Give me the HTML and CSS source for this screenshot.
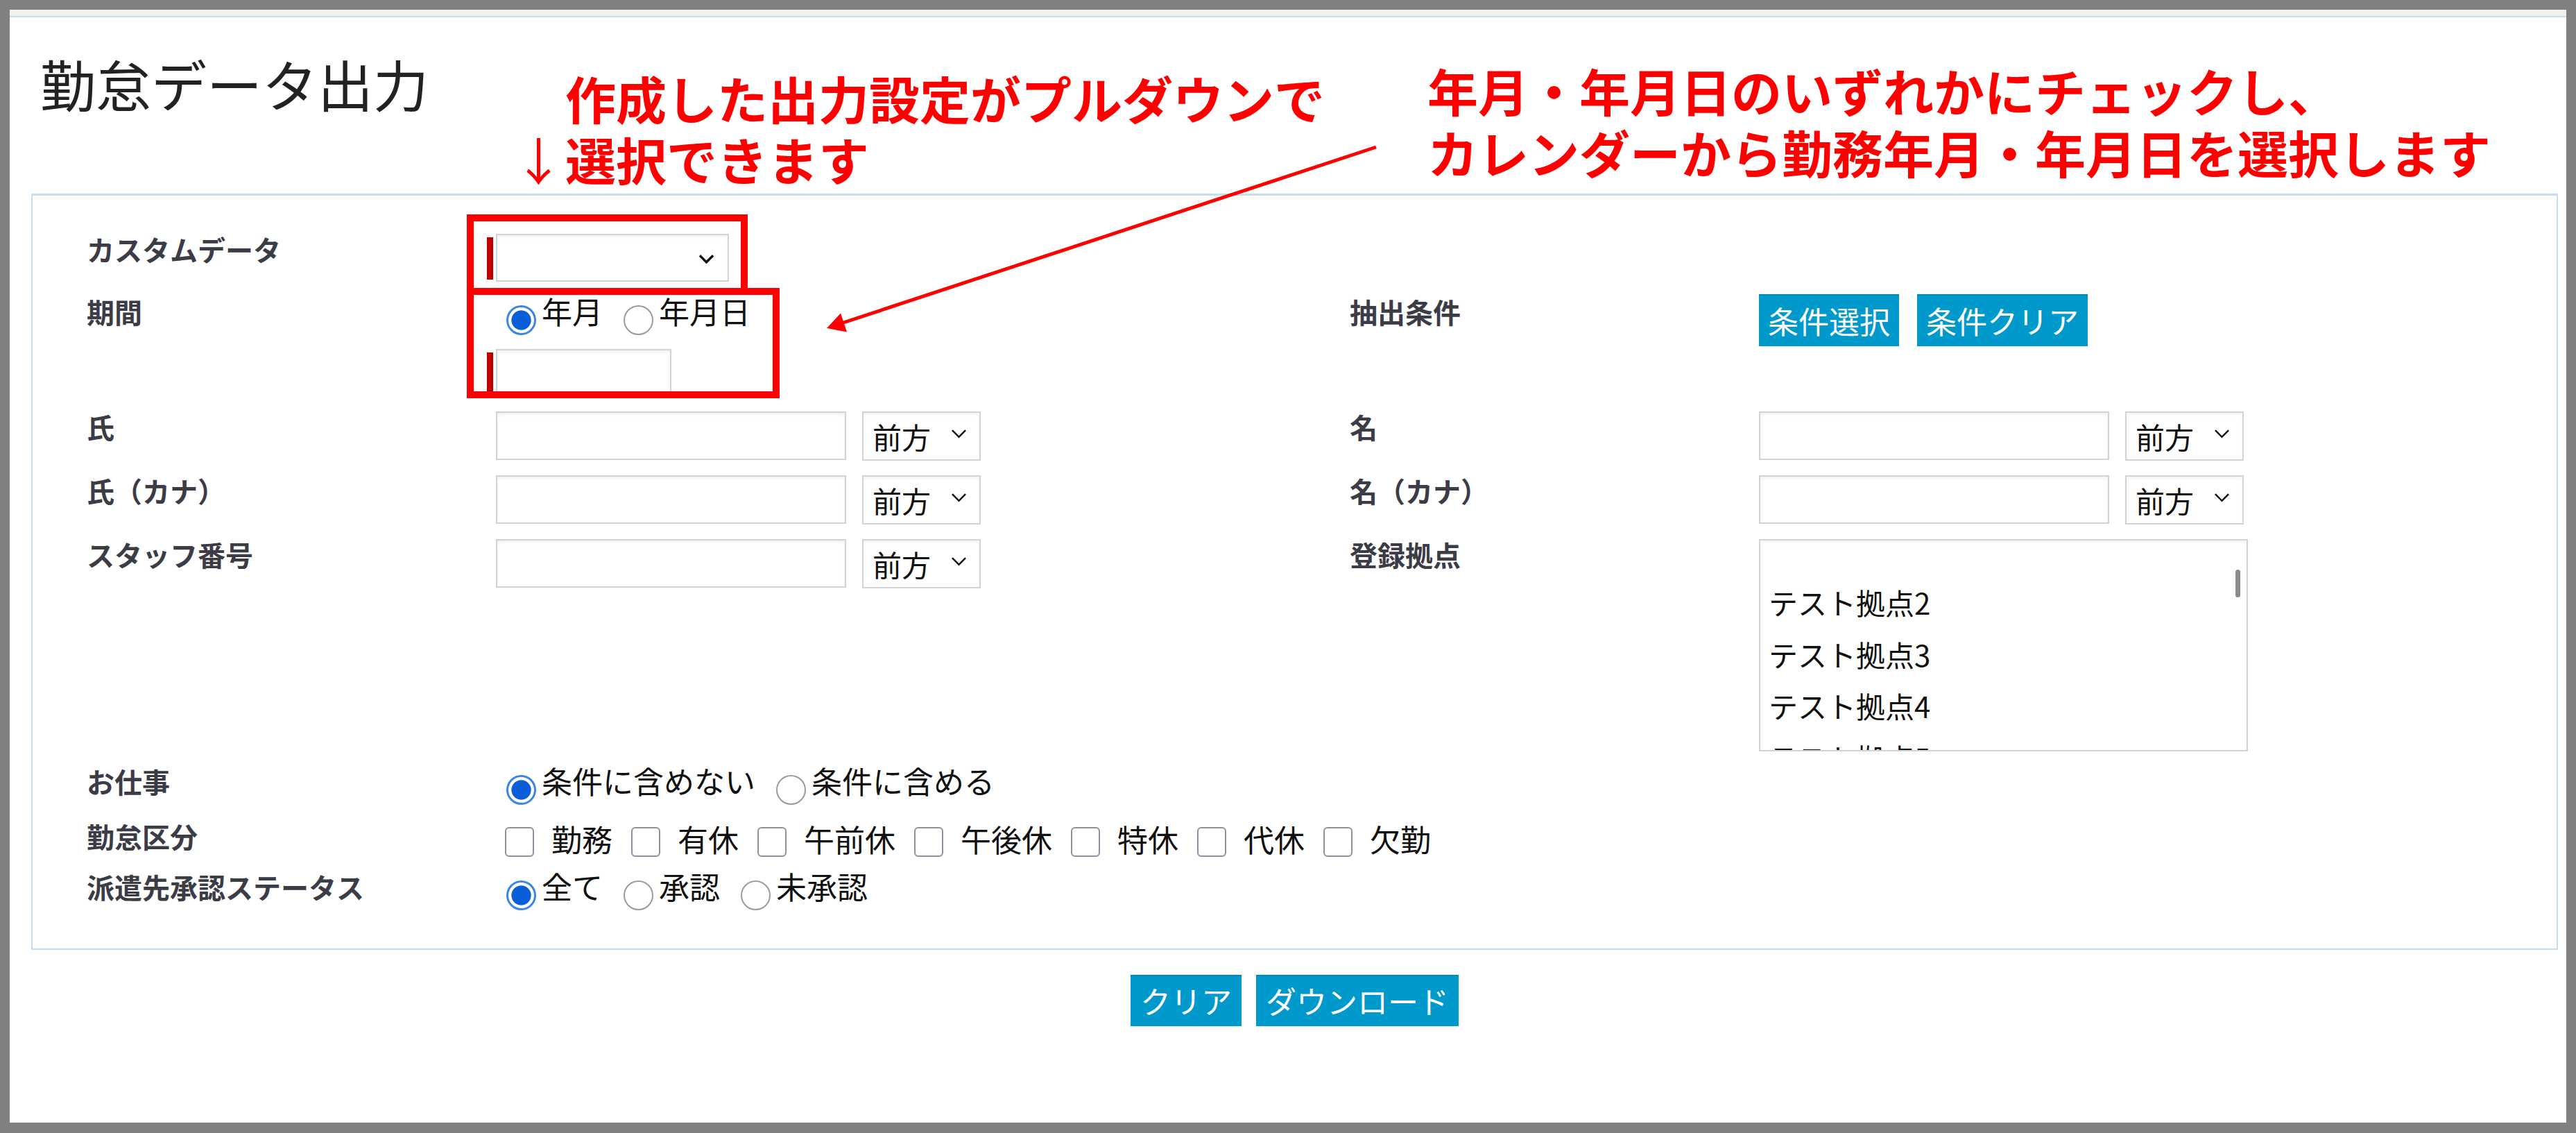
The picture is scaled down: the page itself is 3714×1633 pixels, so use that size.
FILE: index.html
```html
<!DOCTYPE html>
<html lang="ja">
<head>
    <meta charset="UTF-8">
    <title>勤怠データ出力</title>
    <link rel="stylesheet" href="styles.css">
</head>
<body>
    <div class="frame">
        <div class="topbar"></div>
        <h1 class="page-title">勤怠データ出力</h1>

        <div class="panel">
            <div class="row">
                <div class="label">カスタムデータ</div>
                <div class="field req">
                    <span class="req-bar"></span>
                    <div class="select select-custom">
                        <span></span>
                        <svg class="chev" viewBox="0 0 24 16"><polyline points="2,3 12,13 22,3"/></svg>
                    </div>
                </div>
            </div>

            <div class="row">
                <div class="label">期間</div>
                <div class="field">
                    <div class="opts radios">
                        <label class="opt"><input type="radio" name="term" checked><span>年月</span></label>
                        <label class="opt"><input type="radio" name="term"><span>年月日</span></label>
                    </div>
                    <div class="req date-line">
                        <span class="req-bar"></span>
                        <input type="text" class="text date">
                    </div>
                </div>
                <div class="label">抽出条件</div>
                <div class="field btn-line">
                    <button class="btn">条件選択</button>
                    <button class="btn">条件クリア</button>
                </div>
            </div>

            <div class="row">
                <div class="label">氏</div>
                <div class="field inline">
                    <input type="text" class="text name">
                    <div class="select select-sm"><span>前方</span><svg class="chev" viewBox="0 0 24 16"><polyline points="2,3 12,13 22,3"/></svg></div>
                </div>
                <div class="label">名</div>
                <div class="field inline">
                    <input type="text" class="text name">
                    <div class="select select-sm"><span>前方</span><svg class="chev" viewBox="0 0 24 16"><polyline points="2,3 12,13 22,3"/></svg></div>
                </div>
            </div>

            <div class="row">
                <div class="label">氏（カナ）</div>
                <div class="field inline">
                    <input type="text" class="text name">
                    <div class="select select-sm"><span>前方</span><svg class="chev" viewBox="0 0 24 16"><polyline points="2,3 12,13 22,3"/></svg></div>
                </div>
                <div class="label">名（カナ）</div>
                <div class="field inline">
                    <input type="text" class="text name">
                    <div class="select select-sm"><span>前方</span><svg class="chev" viewBox="0 0 24 16"><polyline points="2,3 12,13 22,3"/></svg></div>
                </div>
            </div>

            <div class="row">
                <div class="label">スタッフ番号</div>
                <div class="field inline">
                    <input type="text" class="text name">
                    <div class="select select-sm"><span>前方</span><svg class="chev" viewBox="0 0 24 16"><polyline points="2,3 12,13 22,3"/></svg></div>
                </div>
                <div class="label">登録拠点</div>
                <div class="field">
                    <div class="listbox">
                        <div class="list-item">テスト拠点2</div>
                        <div class="list-item">テスト拠点3</div>
                        <div class="list-item">テスト拠点4</div>
                        <div class="list-item">テスト拠点5</div>
                        <span class="thumb"></span>
                    </div>
                </div>
            </div>

            <div class="row row-job">
                <div class="label">お仕事</div>
                <div class="field">
                    <div class="opts radios">
                        <label class="opt"><input type="radio" name="job" checked><span>条件に含めない</span></label>
                        <label class="opt wide"><input type="radio" name="job"><span>条件に含める</span></label>
                    </div>
                </div>
            </div>

            <div class="row">
                <div class="label">勤怠区分</div>
                <div class="field">
                    <div class="opts checks">
                        <label class="opt"><input type="checkbox"><span>勤務</span></label>
                        <label class="opt"><input type="checkbox"><span>有休</span></label>
                        <label class="opt"><input type="checkbox"><span>午前休</span></label>
                        <label class="opt"><input type="checkbox"><span>午後休</span></label>
                        <label class="opt"><input type="checkbox"><span>特休</span></label>
                        <label class="opt"><input type="checkbox"><span>代休</span></label>
                        <label class="opt"><input type="checkbox"><span>欠勤</span></label>
                    </div>
                </div>
            </div>

            <div class="row">
                <div class="label">派遣先承認ステータス</div>
                <div class="field">
                    <div class="opts radios">
                        <label class="opt"><input type="radio" name="status" checked><span>全て</span></label>
                        <label class="opt"><input type="radio" name="status"><span>承認</span></label>
                        <label class="opt"><input type="radio" name="status"><span>未承認</span></label>
                    </div>
                </div>
            </div>
        </div>

        <div class="actions">
            <button class="btn">クリア</button>
            <button class="btn">ダウンロード</button>
        </div>
    </div>

    <!-- annotations drawn over the screenshot -->
    <div class="note note-left">
        <div class="note-line">作成した出力設定がプルダウンで</div>
        <div class="note-line"><span class="note-arrow">↓</span>選択できます</div>
    </div>
    <div class="note note-right">
        <div class="note-line">年月・年月日のいずれかにチェックし、</div>
        <div class="note-line">カレンダーから勤務年月・年月日を選択します</div>
    </div>
    <div class="mark mark-select"></div>
    <div class="mark mark-term"></div>
    <svg class="pointer" width="3714" height="1633" viewBox="0 0 3714 1633">
        <line x1="1984" y1="212" x2="1216" y2="465" stroke="#ff0000" stroke-width="5"/>
        <polygon points="1192,473 1212,451.5 1221,478.5" fill="#ff0000"/>
    </svg>
</body>
</html>
```

FILE: styles.css
```css
body {
    margin: 0;
    position: relative;
    font-family: "Noto Sans CJK JP", "Noto Sans", sans-serif;
    color: #111;
    background: #fff;
}
.frame {
    box-sizing: border-box;
    width: 3714px;
    height: 1633px;
    border: 14px solid #808080;
    border-bottom-width: 15px;
    background: #fff;
}
.topbar {
    height: 9px;
    background: #f1f0eb;
    border-bottom: 2px solid #c8ddf4;
}
.page-title {
    margin: 0;
    padding: 44px 0 0 44px;
    font-size: 80px;
    font-weight: 400;
    line-height: 100px;
    color: #222;
}

/* search panel */
.panel {
    margin: 110px 12px 0 31px;
    border: 2px solid #c6dcf2;
    border-top-width: 3px;
    padding: 55px 0 34px 78px;
}
.row {
    display: grid;
    grid-template-columns: 590px 1231px 590px 1fr;
    align-items: start;
    margin-bottom: 21px;
}
.row-job {
    margin-bottom: 23px;
}
.label {
    font-size: 40px;
    font-weight: 700;
    line-height: 44px;
    color: #3c3c46;
    white-space: nowrap;
}
.field {
    font-size: 44px;
}
.inline {
    display: flex;
    gap: 23px;
}
.req {
    display: flex;
    align-items: flex-start;
}
.req-bar {
    width: 9px;
    height: 61px;
    margin: 5px 4px 0 -13px;
    background: #c00000;
}
.date-line {
    margin-top: 20px;
}

/* inputs */
.text {
    box-sizing: border-box;
    height: 70px;
    border: 2px solid #d3d3d3;
    box-shadow: inset 0 3px 4px rgba(0, 0, 0, 0.06);
    background: #fff;
    margin: 0;
    padding: 0 12px;
    font: inherit;
}
.name {
    width: 505px;
}
.date {
    width: 253px;
    height: 69px;
}
.select {
    box-sizing: border-box;
    display: flex;
    align-items: center;
    justify-content: space-between;
    height: 71px;
    border: 2px solid #d3d3d3;
    box-shadow: inset 0 3px 4px rgba(0, 0, 0, 0.05);
    background: #fff;
    font-size: 42px;
    line-height: 1;
}
.select-custom {
    width: 336px;
    height: 69px;
    padding: 0 19px 0 14px;
}
.select-sm {
    width: 171px;
    padding: 0 18px 0 13px;
}
.chev {
    width: 23px;
    height: 16px;
    fill: none;
    stroke: #111;
    stroke-width: 3.5;
}
.select-custom .chev {
    margin-top: 3px;
}
.select-sm .chev {
    stroke-width: 2.6;
    margin-bottom: 8px;
}

/* radios and checkboxes */
.opts {
    display: flex;
}
.radios {
    padding-left: 15px;
}
.checks {
    padding-left: 13px;
}
.opt {
    display: flex;
    align-items: flex-start;
    line-height: 42px;
    white-space: nowrap;
}
.radios .opt + .opt {
    margin-left: 30px;
}
.radios .wide {
    margin-left: 38px;
}
.checks .opt + .opt {
    margin-left: 27px;
}
input[type="radio"] {
    appearance: none;
    box-sizing: border-box;
    width: 43px;
    height: 43px;
    margin: 13px 8px 0 0;
    border: 2px solid #9a9aa4;
    border-radius: 50%;
    background: #fff;
}
input[type="radio"]:checked {
    border: 3px solid #3b86e6;
    background: radial-gradient(circle closest-side, #0a5fd8 0 74%, #fff 79%);
}
input[type="checkbox"] {
    appearance: none;
    box-sizing: border-box;
    width: 42px;
    height: 43px;
    margin: 9px 25px 0 0;
    border: 2px solid #8f8f9d;
    border-radius: 6px;
    background: #fff;
}
.checks .opt span {
    padding-top: 5px;
}

/* listbox */
.listbox {
    position: relative;
    box-sizing: border-box;
    width: 705px;
    height: 306px;
    border: 2px solid #d3d3d3;
    box-shadow: inset 0 3px 4px rgba(0, 0, 0, 0.05);
    overflow: hidden;
    padding: 52px 0 0 12px;
    font-size: 42px;
}
.list-item {
    line-height: 74.5px;
    white-space: nowrap;
}
.thumb {
    position: absolute;
    top: 42px;
    right: 9px;
    width: 7px;
    height: 40px;
    border-radius: 4px;
    background: #8a8a8a;
}

/* buttons */
.btn {
    height: 75px;
    padding: 0 13px;
    border: 0;
    background: #0099cc;
    box-shadow: inset 0 2px 0 #0087bb;
    color: #fff;
    font-family: inherit;
    font-size: 44px;
    line-height: 1;
}
.btn-line {
    display: flex;
    gap: 26px;
    margin-top: -3px;
}
.actions {
    display: flex;
    justify-content: center;
    gap: 21px;
    margin: 36px 12px 0 31px;
}
.actions .btn {
    height: 74px;
    padding: 0 14px;
}

/* annotation layer */
.note {
    position: absolute;
    color: #ff0000;
    font-weight: 700;
    font-size: 73px;
    white-space: nowrap;
}
.note-line {
    height: 88px;
    line-height: 88px;
}
.note-left {
    left: 815px;
    top: 96px;
}
.note-right {
    left: 2058px;
    top: 85px;
}
.note-right .note-line {
    height: 89px;
    line-height: 89px;
}
.note-arrow {
    display: inline-block;
    width: 77px;
    margin-left: -77px;
    font-weight: 400;
    text-align: center;
}
.mark {
    position: absolute;
    box-sizing: border-box;
    border: 10px solid #ff0000;
}
.mark-select {
    left: 673px;
    top: 309px;
    width: 405px;
    height: 116px;
}
.mark-term {
    left: 673px;
    top: 415px;
    width: 451px;
    height: 159px;
}
.pointer {
    position: absolute;
    left: 0;
    top: 0;
    pointer-events: none;
}
```
